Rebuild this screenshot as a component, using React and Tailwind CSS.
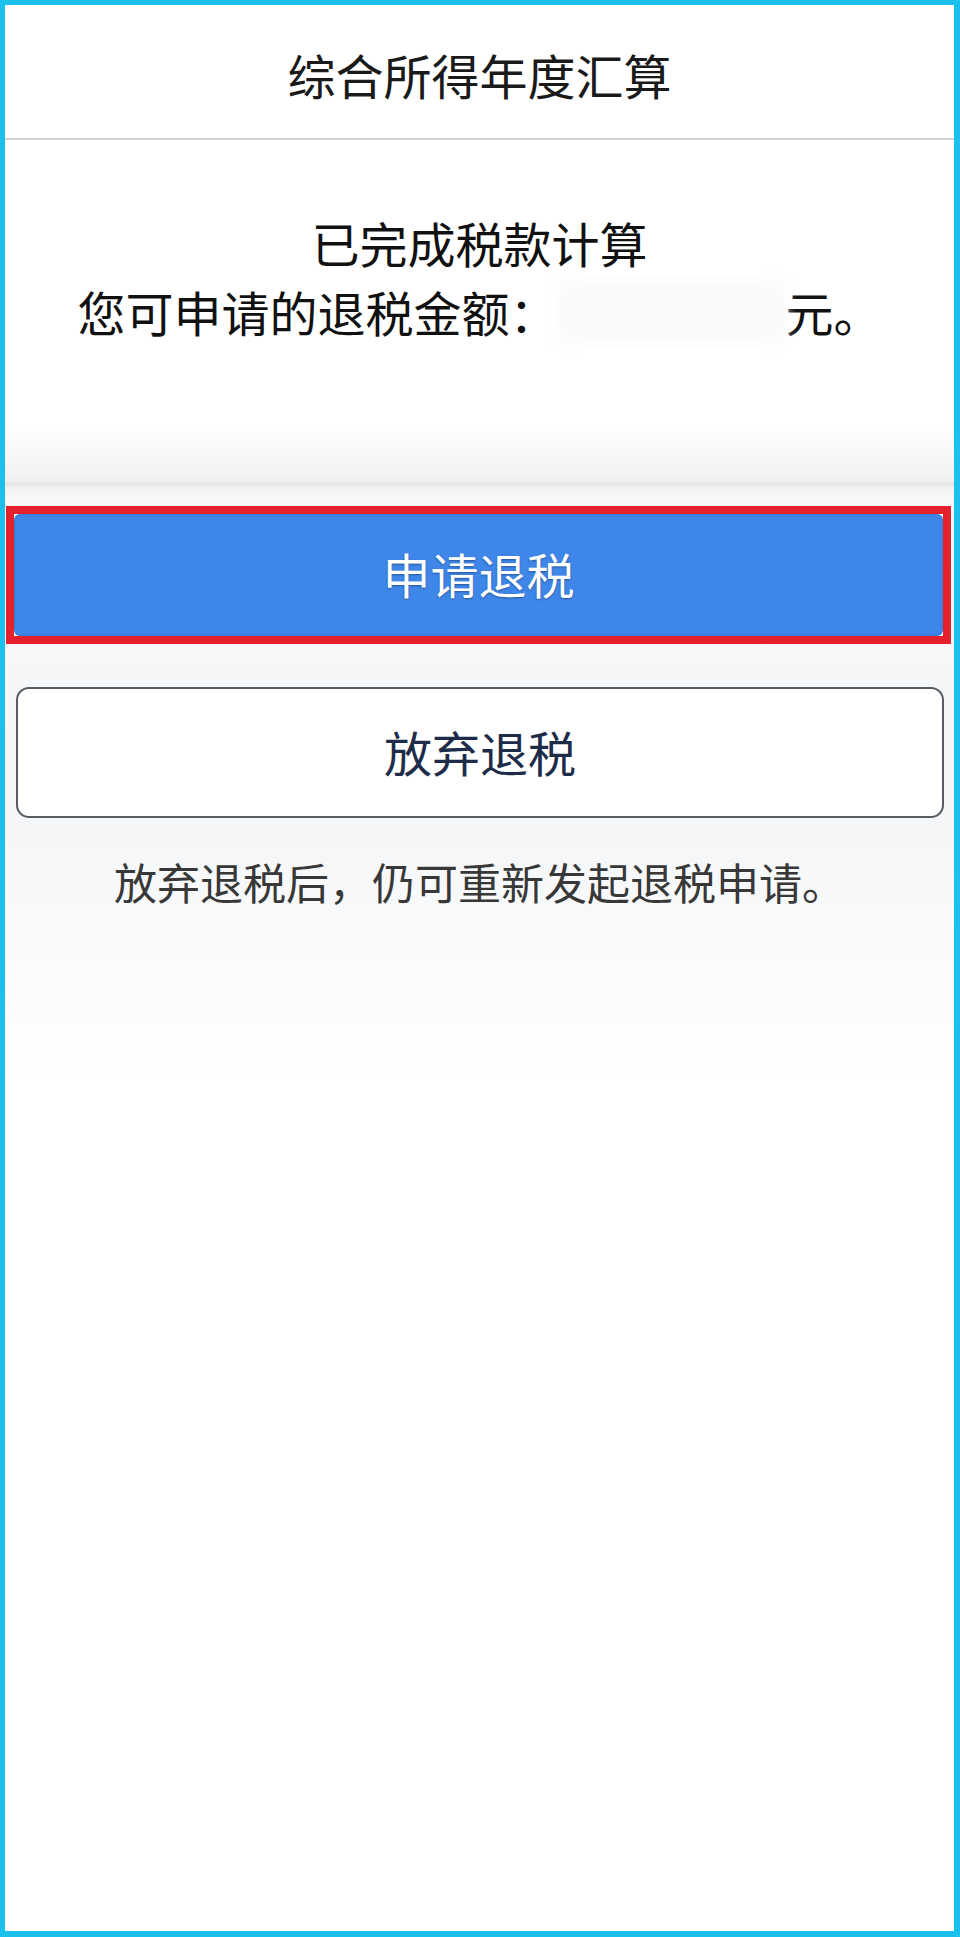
import React from "react";

// Refund confirmation screen of the annual tax settlement flow.
const FONT = "font-['Noto_Sans_CJK_SC','Noto_Sans',sans-serif]";

const App = () => {
  return (
    <div
      className={`${FONT} flex h-[1937px] w-full flex-col border-t-[5px] border-l-[5px] border-r-[6px] border-b-[6px] border-[#1bc0ec] bg-white`}
    >
      {/* Header */}
      <div className="flex h-[135px] shrink-0 items-center justify-center border-b-2 border-[#d4d4d4] pt-[4px] text-[48px] text-[#1a1a1a]">
        综合所得年度汇算
      </div>

      {/* Result summary */}
      <div className="h-[286px] shrink-0 pt-[68px] text-center text-[48px] leading-[69px] text-[#111111]">
        <div>已完成税款计算</div>
        <div className="flex items-center justify-center">
          <span>您可申请的退税金额：</span>
          <span className="inline-block h-[64px] w-[228px] rounded-xl bg-[#fafafa] blur-[6px]" />
          <span>元。</span>
        </div>
      </div>

      {/* Card edge / shadow */}
      <div className="h-[74px] shrink-0 bg-[linear-gradient(#ffffff_0%,#f7f7f8_45%,#f0f0f1_74%,#e3e4e6_78%,#f2f3f4_84%,#f7f8fa_100%)]" />

      {/* Actions */}
      <div className="flex flex-1 flex-col bg-[linear-gradient(#f7f8fa_0px,#f5f6f8_320px,#fafbfc_460px,#ffffff_580px)] pt-[6px]">
        <div className="ml-[1px] mr-[3px] h-[138px] border-[8px] border-[#e3202c] bg-white">
          <button className="flex h-full w-full items-center justify-center rounded-[6px] bg-[#3e86e8] pb-[4px] text-[48px] text-white shadow-[inset_0_0_3px_rgba(0,0,0,0.18)] [text-shadow:0_1px_2px_rgba(0,0,0,0.35)]">
            申请退税
          </button>
        </div>

        <button className="ml-[11px] mr-[10px] mt-[43px] flex h-[131px] items-center justify-center rounded-[13px] border-2 border-[#585d64] bg-white pb-[4px] text-[48px] text-[#1d2c48]">
          放弃退税
        </button>

        <p className="mt-[33px] text-center text-[43px] leading-[60px] text-[#383838]">
          放弃退税后，仍可重新发起退税申请。
        </p>
      </div>
    </div>
  );
};

export default App;
